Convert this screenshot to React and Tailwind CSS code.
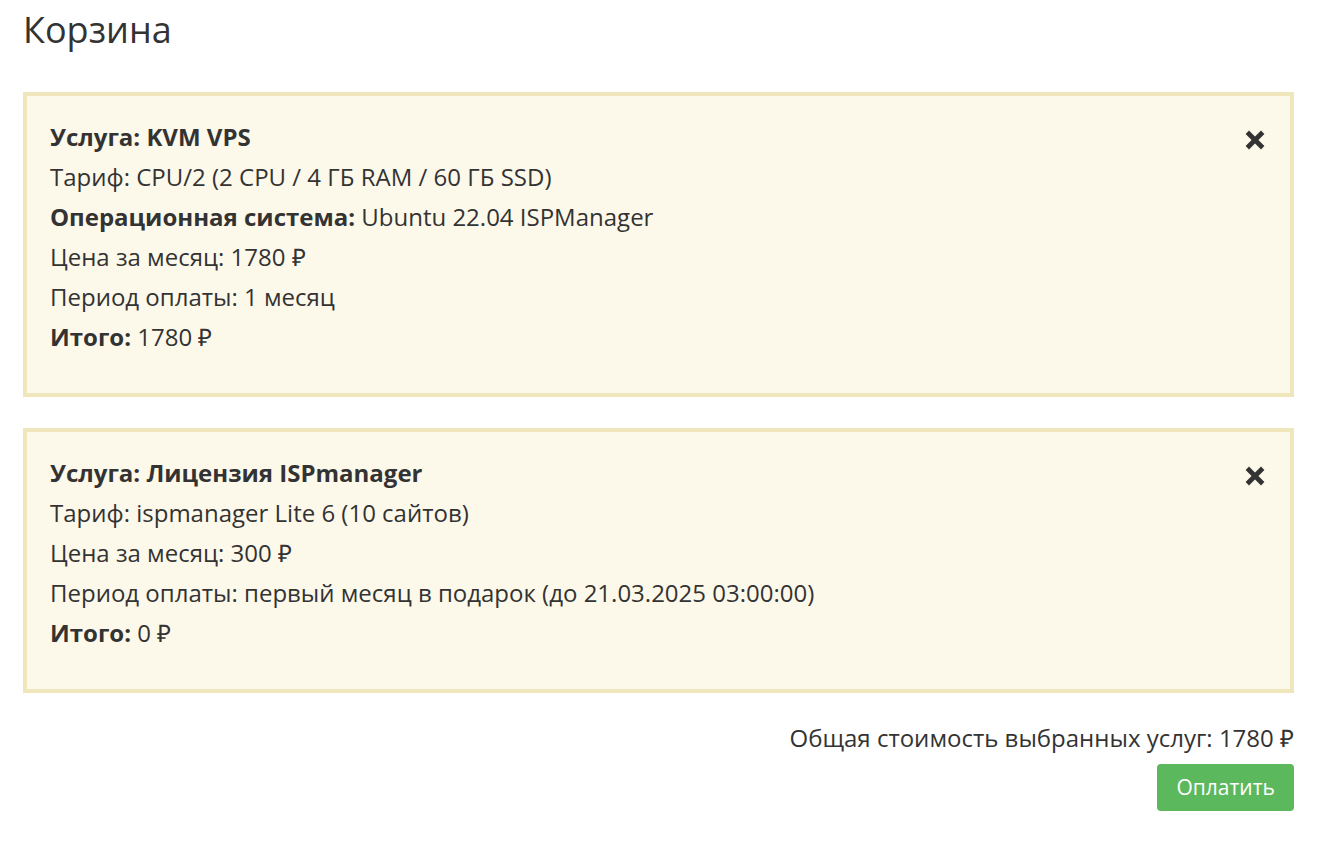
import React from "react";

const items = [
  {
    rows: [
      { b: "Услуга: KVM VPS", t: "" },
      { t: "Тариф: CPU/2 (2 CPU / 4 ГБ RAM / 60 ГБ SSD)" },
      { b: "Операционная система:", t: " Ubuntu 22.04 ISPManager" },
      { t: "Цена за месяц: 1780 ₽" },
      { t: "Период оплаты: 1 месяц" },
      { b: "Итого:", t: " 1780 ₽" },
    ],
  },
  {
    rows: [
      { b: "Услуга: Лицензия ISPmanager", t: "" },
      { t: "Тариф: ispmanager Lite 6 (10 сайтов)" },
      { t: "Цена за месяц: 300 ₽" },
      { t: "Период оплаты: первый месяц в подарок (до 21.03.2025 03:00:00)" },
      { b: "Итого:", t: " 0 ₽" },
    ],
  },
];

function Times() {
  return (
    <svg width="20" height="20" viewBox="0 0 20 20" className="text-[#333]">
      <path
        d="M4 4 L16 16 M16 4 L4 16"
        stroke="currentColor"
        strokeWidth="4.8"
        strokeLinecap="square"
      />
    </svg>
  );
}

export default function App() {
  return (
    <div
      className="min-h-[851px] bg-white pl-[23px] pr-[39px] text-[#333]"
      style={{ fontFamily: '"Open Sans", sans-serif' }}
    >
      <h1 className="pt-[6px] text-[36px] leading-[48px] font-normal">Корзина</h1>

      <div className="mt-[38px] flex flex-col gap-[31px]">
        {items.map((it, i) => (
          <div
            key={i}
            className="relative border-4 border-[#f0e6bc] bg-[#fdf9ea] pl-[23px] pr-[28px] pt-[21px] pb-[36px] text-[24px] leading-[40px]"
          >
            {/* закрыть */}
            <button className="absolute right-[25px] top-[34px]">
              <Times />
            </button>
            {it.rows.map((r, j) => (
              <p key={j}>
                {r.b && <b className="font-bold">{r.b}</b>}
                {r.t}
              </p>
            ))}
          </div>
        ))}
      </div>

      <div className="mt-[25px] flex flex-col items-end">
        <p className="text-[24px] leading-[40px]">Общая стоимость выбранных услуг: 1780 ₽</p>
        <button className="mt-[6px] h-[47px] rounded-[4px] bg-[#5cb85c] px-[19px] text-[21px] text-white">
          Оплатить
        </button>
      </div>
    </div>
  );
}
